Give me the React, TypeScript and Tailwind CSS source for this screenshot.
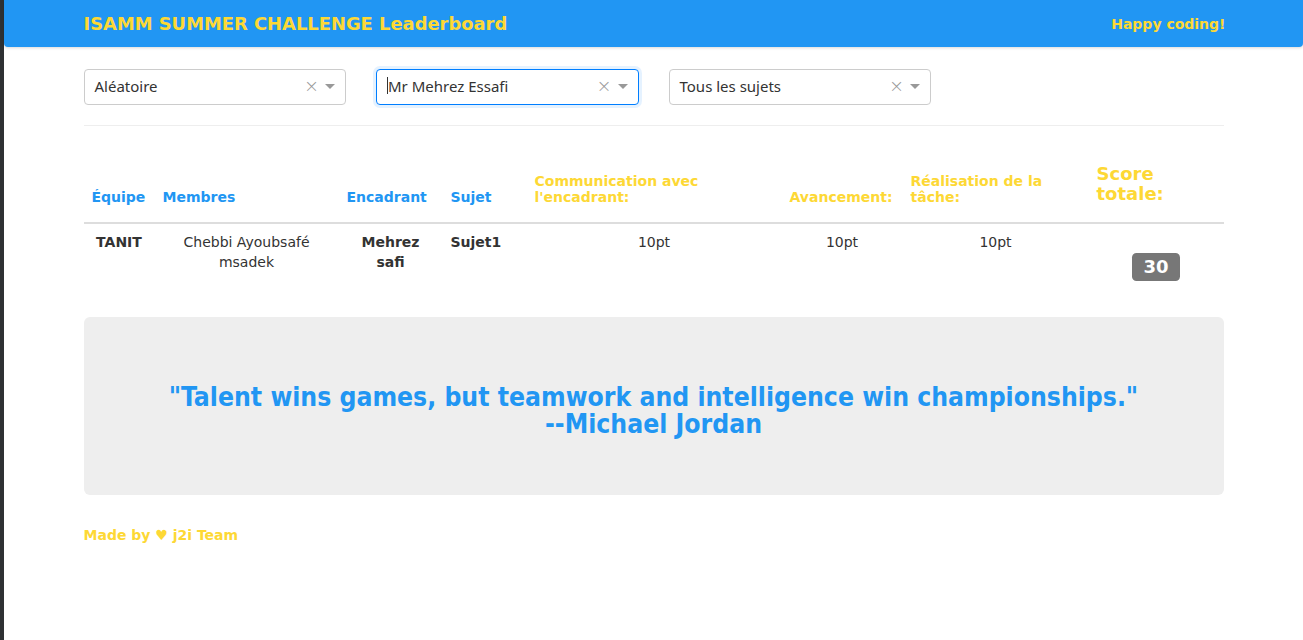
import React from "react";

const BLUE = "text-[#2196f3]";
const YEL = "text-[#fdd835]";

function Select({ value, focused }: { value: string; focused?: boolean }) {
  return (
    <div
      className={
        "w-[262.5px] h-[36px] rounded-[4px] border bg-white flex items-center " +
        (focused
          ? "border-[#007eff] shadow-[0_0_0_3px_rgba(0,126,255,0.1)]"
          : "border-[#cccccc]")
      }
    >
      <div className="flex-1 pl-[10px] pb-[3px] flex items-center text-[15px] text-[#333333] leading-[30px] [font-family:'Noto_Sans',sans-serif] overflow-hidden whitespace-nowrap">
        {focused && <span className="inline-block w-[1px] h-[17px] bg-[#333] mr-[0px]" />}
        <span>{value}</span>
      </div>
      <div className="w-[17px] text-center text-[#999999] text-[18px] leading-none [font-family:'DejaVu_Sans',sans-serif] font-light pb-[2px]">
        ×
      </div>
      <div className="w-[25px] pr-[5px] flex items-center justify-center">
        <span className="block w-0 h-0 border-t-[5px] border-x-[5px] border-b-[2.5px] border-t-[#999999] border-x-transparent border-b-transparent mt-[1px]" />
      </div>
    </div>
  );
}

export default function App() {
  return (
    <div className="flex min-h-[640px] bg-white [font-family:'DejaVu_Sans',sans-serif] text-[#333333] text-[14px] leading-[20px]">
      <div className="w-[4px] shrink-0 bg-[#2e3133]" />
      <div className="flex-1 min-w-0">
        <header className="h-[47px] bg-[#2196f3] rounded-b-[4px] shadow-[0_1px_3px_rgba(0,0,0,0.15)]">
          <div className="w-[1140px] mx-auto h-full flex items-center justify-between">
            <div className={"text-[17.9px] font-bold " + YEL}>ISAMM SUMMER CHALLENGE Leaderboard</div>
            <div className={"text-[14px] font-bold -mr-[2px] " + YEL}>Happy coding!</div>
          </div>
        </header>

        <div className="w-[1140px] mx-auto">
          <div className="mt-[22px] flex gap-[30px]">
            <Select value="Aléatoire" />
            <Select value="Mr Mehrez Essafi" focused />
            <Select value="Tous les sujets" />
          </div>

          <div className="mt-[20px] border-t border-[#eeeeee]" />

          <table className="mt-[20px] mb-[10px] w-[1140px] table-fixed border-collapse">
            <colgroup>
              <col className="w-[71px]" />
              <col className="w-[184px]" />
              <col className="w-[104px]" />
              <col className="w-[84px]" />
              <col className="w-[255px]" />
              <col className="w-[121px]" />
              <col className="w-[186px]" />
              <col className="w-[135px]" />
            </colgroup>
            <thead>
              <tr className="border-b-2 border-[#dddddd]">
                {[
                  ["Équipe", BLUE],
                  ["Membres", BLUE],
                  ["Encadrant", BLUE],
                  ["Sujet", BLUE],
                  ["Communication avec l'encadrant:", YEL],
                  ["Avancement:", YEL],
                  ["Réalisation de la tâche:", YEL],
                ].map(([t, c]) => (
                  <th key={t} className="p-[8px] align-bottom text-left font-bold">
                    <div className={"mt-[10px] mb-[9px] text-[14px] leading-[16px] " + c}>{t}</div>
                  </th>
                ))}
                <th className="p-[8px] align-bottom text-left font-bold">
                  <div className={"my-[10px] text-[18px] leading-[1.1] " + YEL}>
                    Score
                    <br />
                    totale:
                  </div>
                </th>
              </tr>
            </thead>
            <tbody>
              <tr>
                <td className="p-[8px] align-top text-center font-bold">TANIT</td>
                <td className="p-[8px] align-top text-center">
                  Chebbi Ayoubsafé
                  <br />
                  msadek
                </td>
                <td className="p-[8px] align-top text-center font-bold">
                  Mehrez
                  <br />
                  safi
                </td>
                <td className="p-[8px] align-top text-left font-bold">Sujet1</td>
                <td className="p-[8px] align-top text-center">10pt</td>
                <td className="p-[8px] align-top text-center">10pt</td>
                <td className="p-[8px] align-top text-center">10pt</td>
                <td className="p-[8px] align-top text-center">
                  <div className="mt-[21px] mb-[10px] h-[36px]">
                    <span className="inline-block bg-[#777777] text-white font-bold text-[18px] leading-[28px] px-[11px] rounded-[4.5px]">
                      30
                    </span>
                  </div>
                </td>
              </tr>
            </tbody>
          </table>

          <div className="bg-[#eeeeee] rounded-[6px] pt-[67px] pb-[57px]">
            <div
              className={
                "text-center text-[26.3px] leading-[27px] font-bold font-stretch-condensed [font-family:'DejaVu_Sans_Condensed','DejaVu_Sans',sans-serif] " +
                BLUE
              }
            >
              "Talent wins games, but teamwork and intelligence win championships."
              <br />
              --Michael Jordan
            </div>
          </div>

          <div className={"mt-[30px] font-bold text-[14px] leading-[20px] " + YEL}>Made by ♥ j2i Team</div>
        </div>
      </div>
    </div>
  );
}
